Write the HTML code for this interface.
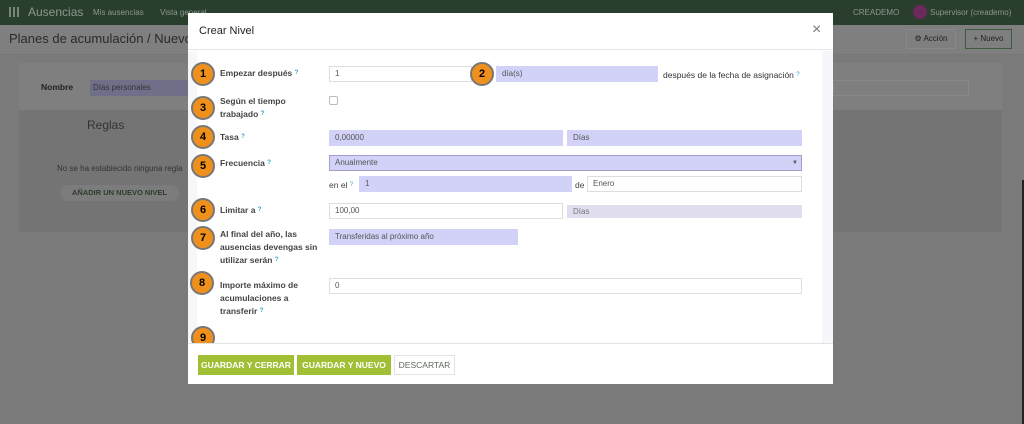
<!DOCTYPE html>
<html><head><meta charset="utf-8"><style>
*{box-sizing:border-box;margin:0;padding:0}
body{width:1024px;height:424px;overflow:hidden;font-family:"Liberation Sans","DejaVu Sans",sans-serif;background:#7a7a7a;position:relative;font-size:9px;color:#333}
.abs{position:absolute}
.nav{left:0;top:0;width:1024px;height:25px;background:#2a3e2d;color:#8a9a8c}
.cp{left:0;top:25px;width:1024px;height:30px;background:#7f7f7f;border-bottom:1px solid #767676}
.modal{left:188px;top:13px;width:645px;height:371px;background:#fff}
.hdr{left:0;top:0;width:645px;height:37px;border-bottom:1px solid #e6e6e6}
.c{position:absolute;width:24px;height:24px;border-radius:50%;background:#f0901c;border:2px solid #777;color:#000;font-weight:bold;font-size:11px;text-align:center;line-height:20px}
.lbl{position:absolute;font-weight:bold;color:#444;font-size:8.5px;line-height:13px}
.q{color:#2aa6c8;font-size:6px;vertical-align:top}
.in{position:absolute;height:16px;border:1px solid #ddd;background:#fff;color:#555;font-size:8px;padding-left:5px;line-height:14px}
.pu{background:#d2d2f8;border-color:#d2d2f8}
.btn{position:absolute;top:355px;height:20px;font-size:8.5px;font-weight:bold;color:#fff;background:#a1bf35;text-align:center;line-height:20px}
</style></head><body>
<div class="abs nav">
<div class="abs" style="left:9px;top:7px;width:10px;height:10px;background:repeating-linear-gradient(90deg,#8a9a8c 0 2px,transparent 2px 4px);opacity:.8"></div>
<div class="abs" style="left:28px;top:5px;font-size:12px">Ausencias</div>
<div class="abs" style="left:93px;top:8px;font-size:8px">Mis ausencias</div>
<div class="abs" style="left:160px;top:8px;font-size:8px">Vista general</div>
<div class="abs" style="left:853px;top:8px;font-size:8px">CREADEMO</div>
<div class="abs" style="left:913px;top:5px;width:14px;height:14px;border-radius:50%;background:#6a2a5e"></div>
<div class="abs" style="left:930px;top:8px;font-size:8px">Supervisor (creademo)</div>
</div>
<div class="abs cp">
<div class="abs" style="left:9px;top:6px;font-size:13px;color:#2a2a2a">Planes de acumulación / Nuevo</div>
<div class="abs" style="left:906px;top:4px;width:50px;height:20px;border:1px solid #888;font-size:8px;line-height:18px;text-align:center;color:#222">⚙ Acción</div>
<div class="abs" style="left:965px;top:4px;width:47px;height:20px;border:1px solid #3c5a3e;font-size:8px;line-height:18px;text-align:center;color:#222">+ Nuevo</div>
</div>
<div class="abs" style="left:19px;top:63px;width:983px;height:47px;background:#7f7f7f"></div>
<div class="abs" style="left:19px;top:110px;width:983px;height:122px;background:#747474"></div>
<div class="abs" style="left:41px;top:82px;font-size:8.5px;font-weight:bold;color:#222">Nombre</div>
<div class="abs" style="left:90px;top:80px;width:100px;height:16px;background:#6f6f8a;font-size:8px;color:#333;padding:3px">Días personales</div>
<div class="abs" style="left:833px;top:80px;width:136px;height:16px;border:1px solid #888"></div>
<div class="abs" style="left:87px;top:118px;font-size:12px;color:#333">Reglas</div>
<div class="abs" style="left:57px;top:164px;font-size:8px;color:#333">No se ha establecido ninguna regla</div>
<div class="abs" style="left:60px;top:185px;width:119px;height:16px;border-radius:8px;background:#7c7c7c;font-size:7.5px;font-weight:bold;color:#2c3c2c;text-align:center;line-height:16px">AÑADIR UN NUEVO NIVEL</div>
<div class="abs" style="left:1022px;top:180px;width:2px;height:244px;background:#222"></div>

<div class="abs modal">
<div class="abs hdr"><div class="abs" style="left:11px;top:12px;font-size:11px;color:#222">Crear Nivel</div><div class="abs" style="left:624px;top:8px;font-size:16px;color:#777">×</div></div>
<div class="abs" style="left:0;top:38px;width:9px;height:292px;background:#f6f7f9"></div>
<div class="abs" style="left:634px;top:38px;width:11px;height:292px;background:#f6f7fa"></div>
<div class="abs" style="left:0;top:330px;width:645px;height:1px;background:#e3e3e3"></div>
</div>
<div class="c" style="left:191px;top:62px">1</div>
<div class="lbl" style="left:220px;top:67px">Empezar después <span class="q">?</span></div>
<div class="in" style="left:329px;top:66px;width:143px">1</div>
<div class="c" style="left:470px;top:62px">2</div>
<div class="in pu" style="left:496px;top:66px;width:162px">día(s)</div>
<div class="lbl" style="left:663px;top:69px;font-weight:normal;color:#333">después de la fecha de asignación <span class="q">?</span></div>
<div class="c" style="left:191px;top:96px">3</div>
<div class="lbl" style="left:220px;top:95px">Según el tiempo<br>trabajado <span class="q">?</span></div>
<div class="abs" style="left:329px;top:96px;width:9px;height:9px;border:1px solid #bbb;border-radius:2px"></div>
<div class="c" style="left:191px;top:125px">4</div>
<div class="lbl" style="left:220px;top:131px">Tasa <span class="q">?</span></div>
<div class="in pu" style="left:329px;top:130px;width:234px">0,00000</div>
<div class="in pu" style="left:567px;top:130px;width:235px">Días</div>
<div class="c" style="left:191px;top:154px">5</div>
<div class="lbl" style="left:220px;top:157px">Frecuencia <span class="q">?</span></div>
<div class="in pu" style="left:329px;top:155px;width:473px;border-color:#a89cc8">Anualmente<span style="position:absolute;right:3px;font-size:6px">▼</span></div>
<div class="lbl" style="left:329px;top:179px;font-weight:normal">en el <span class="q">?</span></div>
<div class="in pu" style="left:359px;top:176px;width:213px">1</div>
<div class="lbl" style="left:575px;top:179px;font-weight:normal">de</div>
<div class="in" style="left:587px;top:176px;width:215px">Enero</div>
<div class="c" style="left:191px;top:198px">6</div>
<div class="lbl" style="left:220px;top:204px">Limitar a <span class="q">?</span></div>
<div class="in" style="left:329px;top:203px;width:234px">100,00</div>
<div class="in" style="left:567px;top:205px;width:235px;height:13px;line-height:11px;background:#e0ddef;border-color:#e0ddef;color:#777">Días</div>
<div class="c" style="left:191px;top:226px">7</div>
<div class="lbl" style="left:220px;top:228px">Al final del año, las<br>ausencias devengas sin<br>utilizar serán <span class="q">?</span></div>
<div class="in pu" style="left:329px;top:229px;width:189px">Transferidas al próximo año</div>
<div class="c" style="left:190px;top:271px">8</div>
<div class="lbl" style="left:220px;top:279px">Importe máximo de<br>acumulaciones a<br>transferir <span class="q">?</span></div>
<div class="in" style="left:329px;top:278px;width:473px">0</div>
<div class="c" style="left:191px;top:326px;clip-path:inset(0 0 7px 0)">9</div>
<div class="btn" style="left:198px;width:96px">GUARDAR Y CERRAR</div>
<div class="btn" style="left:297px;width:94px">GUARDAR Y NUEVO</div>
<div class="btn" style="left:394px;width:61px;background:#fff;border:1px solid #e3e3e3;color:#5a6b5a;font-weight:normal;line-height:18px">DESCARTAR</div>
</body></html>
